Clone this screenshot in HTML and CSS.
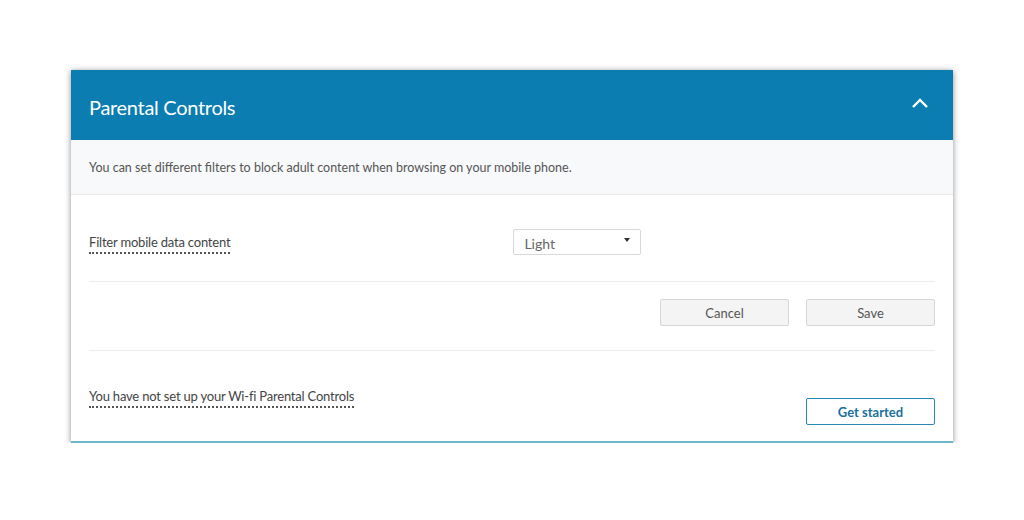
FILE: index.html
```html
<!DOCTYPE html>
<html>
<head>
<meta charset="utf-8">
<link rel="stylesheet" href="styles.css">
</head>
<body>
<div class="card">
  <div class="header">
    <h1 class="title">Parental Controls</h1>
    <svg class="chev" width="18" height="12" viewBox="0 0 18 12"><path d="M2 10 L9 3 L16 10" fill="none" stroke="#fff" stroke-width="2.4"/></svg>
  </div>
  <div class="intro">You can set different filters to block adult content when browsing on your mobile phone.</div>
  <div class="body">
    <div class="row filter-row">
      <span class="dotted">Filter mobile data content</span>
      <div class="select"><span>Light</span><span class="caret"></span></div>
    </div>
    <div class="row actions">
      <button class="btn">Cancel</button>
      <button class="btn">Save</button>
    </div>
    <div class="row wifi-row">
      <span class="dotted">You have not set up your Wi-fi Parental Controls</span>
      <button class="btn btn-outline">Get started</button>
    </div>
  </div>
</div>
</body>
</html>
```
FILE: styles.css
```css
html, body { margin: 0; padding: 0; background: #fff; }
body { font-family: Lato, "Open Sans", sans-serif; color: #555; padding: 70px 0 0 71px; }
.card {
  width: 882px;
  background: #fff;
  box-shadow: 0 1px 6px rgba(0,0,0,0.45);
  border-bottom: 2px solid #6fb8cc;
}
.header {
  height: 70px;
  background: #0b7db0;
  display: flex;
  align-items: center;
  justify-content: space-between;
  padding: 0 24px 0 18px;
}
.title { margin: 4px 0 0; font-weight: 400; font-size: 20px; color: #fff; letter-spacing: -0.3px; }
.chev { margin-top: -4px; }
.intro {
  height: 55px;
  box-sizing: border-box;
  background: #f7f9fa;
  border-bottom: 1px solid #e6e8ea;
  display: flex;
  align-items: center;
  padding-left: 18px;
  font-size: 12.5px;
  color: #555;
}
.body { padding: 0 18px; }
.row { display: flex; }
.filter-row {
  height: 87px;
  box-sizing: border-box;
  border-bottom: 1px solid #ececec;
  padding-top: 39px;
  align-items: flex-start;
  justify-content: flex-start;
}
.dotted {
  font-size: 13px;
  color: #444;
  letter-spacing: -0.2px;
  padding-bottom: 2px;
  border-bottom: 2px dotted #555;
  height: 16px;
  line-height: 16px;
}
.select {
  width: 128px;
  height: 26px;
  box-sizing: border-box;
  border: 1px solid #d8d8d8;
  border-radius: 2px;
  display: flex;
  align-items: center;
  justify-content: space-between;
  padding: 0 10px 0 10px;
  font-size: 14px;
  color: #666;
  margin-top: -5px;
  margin-left: 283px;
}
.select span:first-child { margin-top: 3px; }
.caret {
  width: 0; height: 0;
  border-left: 3.5px solid transparent;
  border-right: 3.5px solid transparent;
  border-top: 4px solid #333;
  margin-top: -4px;
}
.actions {
  height: 69px;
  box-sizing: border-box;
  border-bottom: 1px solid #ececec;
  justify-content: flex-end;
  align-items: flex-start;
  padding-top: 17px;
  gap: 17px;
}
.btn {
  width: 129px;
  height: 27px;
  box-sizing: border-box;
  background: #f4f4f4;
  border: 1px solid #d6d6d6;
  border-radius: 2px;
  font-family: Lato, "Open Sans", sans-serif;
  font-size: 13px;
  color: #555;
  padding: 0;
}
.wifi-row {
  height: 90px;
  box-sizing: border-box;
  justify-content: space-between;
  align-items: flex-start;
  padding-top: 37px;
}
.btn-outline {
  background: #fff;
  border: 1px solid #2a86b4;
  color: #1a6f9c;
  font-weight: 700;
  margin-top: 10px;
}
```
